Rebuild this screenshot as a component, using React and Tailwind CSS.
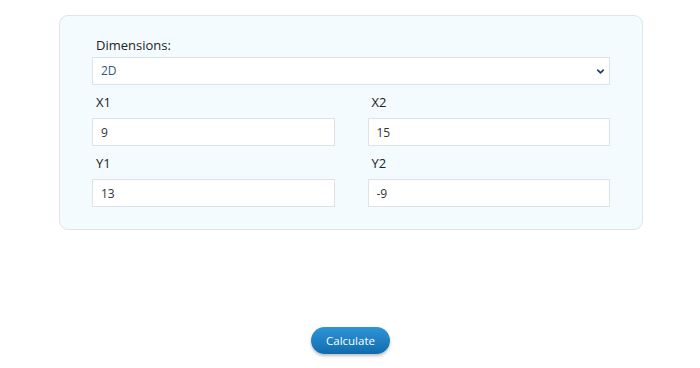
import { useState } from "react";
import { ChevronDown } from "lucide-react";

const fuente = { fontFamily: '"Open Sans", "Noto Sans", sans-serif' };

function Campo({ rotulo, valor, onChange }) {
  return (
    <div>
      <label className="block pl-1 text-[13px] leading-[18px] text-[#222]">{rotulo}</label>
      <input
        value={valor}
        onChange={(e) => onChange(e.target.value)}
        className="mt-[7px] block h-[28px] w-full border border-[#dde3e6] bg-white px-[8px] text-[12px] text-[#333] outline-none"
      />
    </div>
  );
}

export default function App() {
  const [dim, setDim] = useState("2D");
  const [v, setV] = useState({ x1: "9", x2: "15", y1: "13", y2: "-9" });
  const poner = (k) => (val) => setV((o) => ({ ...o, [k]: val }));

  return (
    <div className="min-h-[368px] bg-white pt-[15px]" style={fuente}>
      <div className="ml-[59px] w-[584px] rounded-[9px] border border-[#dde6ea] bg-[#f3fbfe] px-[32px] pt-[20px] pb-[22px]">
        <label className="block pl-1 text-[13px] leading-[18px] text-[#222]">Dimensions:</label>
        <div className="relative mt-[3px]">
          <select
            value={dim}
            onChange={(e) => setDim(e.target.value)}
            className="block h-[28px] w-full appearance-none border border-[#dde3e6] bg-white px-[8px] text-[12px] text-[#2f5777] outline-none"
          >
            <option>2D</option>
            <option>3D</option>
          </select>
          <ChevronDown className="pointer-events-none absolute right-[4px] top-[9px] h-[11px] w-[11px] text-[#1f3f5e]" strokeWidth={3.5} />
        </div>
        <div className="mt-[8px] grid grid-cols-2 gap-x-[33px] gap-y-[8px]">
          <Campo rotulo="X1" valor={v.x1} onChange={poner("x1")} />
          <Campo rotulo="X2" valor={v.x2} onChange={poner("x2")} />
          <Campo rotulo="Y1" valor={v.y1} onChange={poner("y1")} />
          <Campo rotulo="Y2" valor={v.y2} onChange={poner("y2")} />
        </div>
      </div>

      <div className="mt-[97px] flex justify-center pl-[1px]">
        <button className="h-[27px] w-[79px] rounded-full bg-gradient-to-b from-[#2d95d8] to-[#0f6cae] text-[11.5px] font-medium text-white shadow-[0_2px_3px_rgba(0,0,0,0.25)]">
          Calculate
        </button>
      </div>
    </div>
  );
}
